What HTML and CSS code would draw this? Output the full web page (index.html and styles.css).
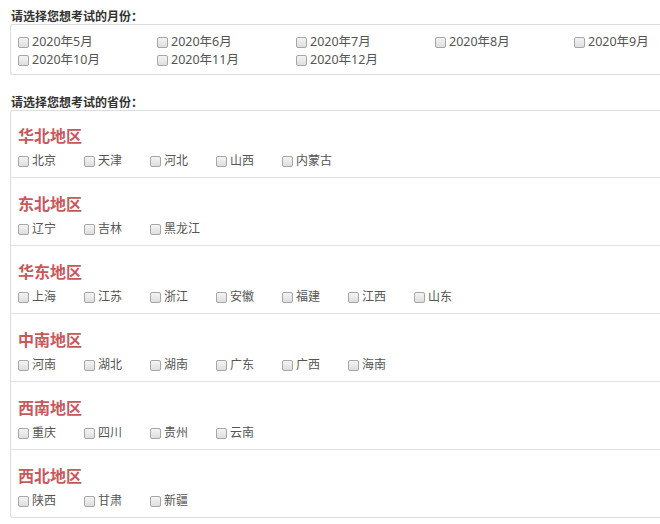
FILE: index.html
```html
<!DOCTYPE html>
<html lang="zh-CN">
<head>
    <meta charset="UTF-8">
    <title>考试报名</title>
    <link rel="stylesheet" href="styles.css">
</head>
<body>
    <div class="page">
        <div class="field-label">请选择您想考试的月份：</div>
        <div class="box month-box">
            <label class="opt month"><span class="cb"></span>2020年5月</label>
            <label class="opt month"><span class="cb"></span>2020年6月</label>
            <label class="opt month"><span class="cb"></span>2020年7月</label>
            <label class="opt month"><span class="cb"></span>2020年8月</label>
            <label class="opt month"><span class="cb"></span>2020年9月</label>
            <label class="opt month"><span class="cb"></span>2020年10月</label>
            <label class="opt month"><span class="cb"></span>2020年11月</label>
            <label class="opt month"><span class="cb"></span>2020年12月</label>
        </div>

        <div class="field-label second">请选择您想考试的省份：</div>
        <div class="box region-box" id="regions"></div>
    </div>

    <script>
        const regions = [
            ['华北地区', ['北京', '天津', '河北', '山西', '内蒙古']],
            ['东北地区', ['辽宁', '吉林', '黑龙江']],
            ['华东地区', ['上海', '江苏', '浙江', '安徽', '福建', '江西', '山东']],
            ['中南地区', ['河南', '湖北', '湖南', '广东', '广西', '海南']],
            ['西南地区', ['重庆', '四川', '贵州', '云南']],
            ['西北地区', ['陕西', '甘肃', '新疆']]
        ];

        const box = document.getElementById('regions');
        regions.forEach(([name, list]) => {
            const sec = document.createElement('div');
            sec.className = 'region';
            sec.innerHTML = `
                <div class="region-title">${name}</div>
                <div class="region-items">
                    ${list.map(p => `<label class="opt prov"><span class="cb"></span>${p}</label>`).join('')}
                </div>
            `;
            box.appendChild(sec);
        });
    </script>
</body>
</html>
```

FILE: styles.css
```css
html, body { margin: 0; background: #fff; overflow: hidden; }
body { font-family: "Noto Sans", "Noto Sans CJK SC", sans-serif; color: #333; }
.page { padding: 9px 0 0 10px; width: 650px; }
.field-label { font-size: 12px; font-weight: bold; line-height: 15px; padding-left: 1px; color: #333; }
.field-label.second { margin-top: 20px; }
.box { border: 1px solid #ddd; border-right: none; border-radius: 3px 0 0 3px; background: #fff; }
.month-box { display: grid; grid-template-columns: repeat(4, 139px) 1fr; padding: 8px 0 5px 7px; }
.opt { display: flex; align-items: center; white-space: nowrap; color: #555; }
.month { font-size: 12.5px; line-height: 18px; }
.cb { box-sizing: border-box; width: 11px; height: 11px; border: 1px solid #a6a6a6; border-radius: 2px; background: linear-gradient(#f4f4f4, #dedede); margin-right: 3px; flex: none; }
.region { padding: 14px 0 7px 7px; border-bottom: 1px solid #e3e3e3; }
.region + .region { padding-top: 15px; }
.region:last-child { border-bottom: none; }
.region-title { font-size: 16px; font-weight: bold; line-height: 22px; color: #c9585d; margin-bottom: 5px; }
.region-items { display: flex; }
.prov { width: 66px; font-size: 12px; line-height: 18px; }
```
